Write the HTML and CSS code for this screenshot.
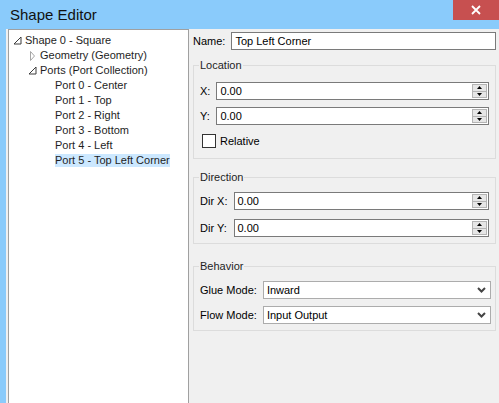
FILE: index.html
```html
<!DOCTYPE html>
<html>
<head>
<meta charset="utf-8">
<title>Shape Editor</title>
<link rel="stylesheet" href="styles.css">
</head>
<body>
<div class="window">
  <div class="titlebar">
    <div class="title">Shape Editor</div>
    <div class="close">
      <svg width="10" height="10" viewBox="0 0 10 10"><path d="M1 1 L9 9 M9 1 L1 9" stroke="#fff" stroke-width="1.8" fill="none"/></svg>
    </div>
  </div>
  <div class="body">
    <div class="tree">
      <div class="row lvl0">
        <span class="exp"><svg width="9" height="9" viewBox="0 0 9 9"><path d="M8 1 L8 8 L1 8 Z" fill="none" stroke="#3c3c3c" stroke-width="1"/></svg></span>
        <span class="txt">Shape 0 - Square</span>
      </div>
      <div class="row lvl1">
        <span class="exp"><svg width="9" height="10" viewBox="0 0 9 10"><path d="M2.5 0.5 L6.5 5 L2.5 9.5 Z" fill="#fff" stroke="#a6a6a6" stroke-width="1"/></svg></span>
        <span class="txt">Geometry (Geometry)</span>
      </div>
      <div class="row lvl1">
        <span class="exp"><svg width="9" height="9" viewBox="0 0 9 9"><path d="M8 1 L8 8 L1 8 Z" fill="none" stroke="#3c3c3c" stroke-width="1"/></svg></span>
        <span class="txt">Ports (Port Collection)</span>
      </div>
      <div class="row lvl2"><span class="exp"></span><span class="txt">Port 0 - Center</span></div>
      <div class="row lvl2"><span class="exp"></span><span class="txt">Port 1 - Top</span></div>
      <div class="row lvl2"><span class="exp"></span><span class="txt">Port 2 - Right</span></div>
      <div class="row lvl2"><span class="exp"></span><span class="txt">Port 3 - Bottom</span></div>
      <div class="row lvl2"><span class="exp"></span><span class="txt">Port 4 - Left</span></div>
      <div class="row lvl2"><span class="exp"></span><span class="txt selected">Port 5 - Top Left Corner</span></div>
    </div>
    <div class="panel">
      <div class="name-row">
        <span class="lbl">Name:</span>
        <div class="field"><span class="val">Top Left Corner</span></div>
      </div>

      <fieldset class="group loc">
        <legend>Location</legend>
        <div class="grid g-loc">
          <span class="lbl">X:</span>
          <div class="field">
            <span class="val">0.00</span>
            <span class="spin"><span class="up"><svg width="5" height="3" viewBox="0 0 5 3"><path d="M0 3 L2.5 0 L5 3 Z" fill="#000"/></svg></span><span class="dn"><svg width="5" height="3" viewBox="0 0 5 3"><path d="M0 0 L2.5 3 L5 0 Z" fill="#000"/></svg></span></span>
          </div>
          <span class="lbl">Y:</span>
          <div class="field">
            <span class="val">0.00</span>
            <span class="spin"><span class="up"><svg width="5" height="3" viewBox="0 0 5 3"><path d="M0 3 L2.5 0 L5 3 Z" fill="#000"/></svg></span><span class="dn"><svg width="5" height="3" viewBox="0 0 5 3"><path d="M0 0 L2.5 3 L5 0 Z" fill="#000"/></svg></span></span>
          </div>
        </div>
        <div class="check-row">
          <span class="checkbox"></span>
          <span class="lbl">Relative</span>
        </div>
      </fieldset>

      <fieldset class="group dir">
        <legend>Direction</legend>
        <div class="grid g-dir">
          <span class="lbl">Dir X:</span>
          <div class="field">
            <span class="val">0.00</span>
            <span class="spin"><span class="up"><svg width="5" height="3" viewBox="0 0 5 3"><path d="M0 3 L2.5 0 L5 3 Z" fill="#000"/></svg></span><span class="dn"><svg width="5" height="3" viewBox="0 0 5 3"><path d="M0 0 L2.5 3 L5 0 Z" fill="#000"/></svg></span></span>
          </div>
          <span class="lbl">Dir Y:</span>
          <div class="field">
            <span class="val">0.00</span>
            <span class="spin"><span class="up"><svg width="5" height="3" viewBox="0 0 5 3"><path d="M0 3 L2.5 0 L5 3 Z" fill="#000"/></svg></span><span class="dn"><svg width="5" height="3" viewBox="0 0 5 3"><path d="M0 0 L2.5 3 L5 0 Z" fill="#000"/></svg></span></span>
          </div>
        </div>
      </fieldset>

      <fieldset class="group beh">
        <legend>Behavior</legend>
        <div class="grid g-beh">
          <span class="lbl">Glue Mode:</span>
          <div class="field select">
            <span class="val">Inward</span>
            <svg class="chev" width="9" height="6" viewBox="0 0 9 6"><path d="M1 1 L4.5 4.5 L8 1" fill="none" stroke="#444" stroke-width="2"/></svg>
          </div>
          <span class="lbl">Flow Mode:</span>
          <div class="field select">
            <span class="val">Input Output</span>
            <svg class="chev" width="9" height="6" viewBox="0 0 9 6"><path d="M1 1 L4.5 4.5 L8 1" fill="none" stroke="#444" stroke-width="2"/></svg>
          </div>
        </div>
      </fieldset>
    </div>
  </div>
</div>
</body>
</html>
```

FILE: styles.css
```css
html, body {
  margin: 0;
  padding: 0;
  width: 499px;
  height: 403px;
  overflow: hidden;
  font-family: "Liberation Sans", Arial, sans-serif;
  font-size: 11px;
  color: #000;
}

.window {
  width: 499px;
  height: 403px;
  display: flex;
  flex-direction: column;
  background: #8acbfb;
}

.titlebar {
  height: 29px;
  flex: 0 0 29px;
  display: flex;
  align-items: flex-start;
  background: #8acbfb;
}

.title {
  margin: 6px 0 0 10px;
  font-size: 15px;
  line-height: 18px;
  color: #111;
}

.close {
  margin-left: auto;
  width: 46px;
  height: 20px;
  background: #c75050;
  display: flex;
  align-items: center;
  justify-content: center;
}

.body {
  flex: 1;
  display: flex;
  border-left: 6px solid #8acbfb;
  background: #f0f0f0;
  min-height: 0;
}

.tree {
  width: 181px;
  flex: 0 0 181px;
  box-sizing: border-box;
  margin-left: 2px;
  border: 1px solid #a0a0a0;
  border-bottom: none;
  background: #fff;
  padding-top: 3px;
}

.row {
  display: flex;
  align-items: center;
  height: 15px;
  line-height: 15px;
  color: #1e1e1e;
  white-space: nowrap;
}

.lvl0 { padding-left: 0; }
.lvl1 { padding-left: 15px; }
.lvl2 { padding-left: 30px; }

.exp {
  width: 16px;
  flex: 0 0 16px;
  height: 15px;
  display: flex;
  align-items: center;
  padding-left: 4px;
  box-sizing: border-box;
}

.exp svg { display: block; }

.txt {
  display: inline-block;
}

.selected {
  background: #cce8ff;
  height: 13px;
  line-height: 13px;
}

.panel {
  flex: 1;
  display: flex;
  flex-direction: column;
  padding: 3px 3px 0 4px;
  min-width: 0;
}

.name-row {
  display: flex;
  align-items: center;
  gap: 6px;
}

.name-row .field {
  flex: 1;
}

.lbl {
  white-space: nowrap;
  line-height: 13px;
}

.field {
  height: 18px;
  box-sizing: border-box;
  border: 1px solid #7a7a7a;
  background: #fff;
  display: flex;
  align-items: center;
}

.field .val {
  flex: 1;
  padding-left: 3px;
  line-height: 14px;
  white-space: nowrap;
}

.spin {
  width: 15px;
  height: 14px;
  margin-right: 1px;
  display: flex;
  flex-direction: column;
}

.spin .up, .spin .dn {
  flex: 1;
  box-sizing: border-box;
  border: 1px solid #b4b4b4;
  background: #e6e6e6;
  display: flex;
  align-items: center;
  justify-content: center;
}

.spin .dn { border-top: none; }

.spin svg { display: block; }

.select {
  border-color: #acacac;
  margin-right: -2px;
}

.chev {
  display: block;
  margin-right: 4px;
}

.group {
  margin: 0;
  border: 1px solid #dcdcdc;
  padding: 9px 6px 9px 6px;
  min-width: 0;
}

.group legend {
  padding: 0 1px;
  margin-left: -1px;
  font-size: 11px;
  line-height: 13px;
  color: #1e1e1e;
}

.loc { margin-top: 9px; padding-top: 10px; padding-bottom: 10px; }
.dir { margin-top: 12px; padding-top: 8px; padding-bottom: 6px; }
.beh { margin-top: 16px; padding-top: 8px; padding-bottom: 6px; }

.grid {
  display: grid;
  grid-template-columns: auto 1fr;
  column-gap: 6px;
  align-items: center;
}

.g-loc { row-gap: 7px; }
.g-dir { row-gap: 9px; }
.g-beh { row-gap: 7px; }

.check-row {
  display: flex;
  align-items: center;
  gap: 4px;
  margin-top: 9px;
  padding-left: 2px;
}

.checkbox {
  width: 14px;
  height: 14px;
  box-sizing: border-box;
  border: 1px solid #333;
  background: #fff;
}
```
